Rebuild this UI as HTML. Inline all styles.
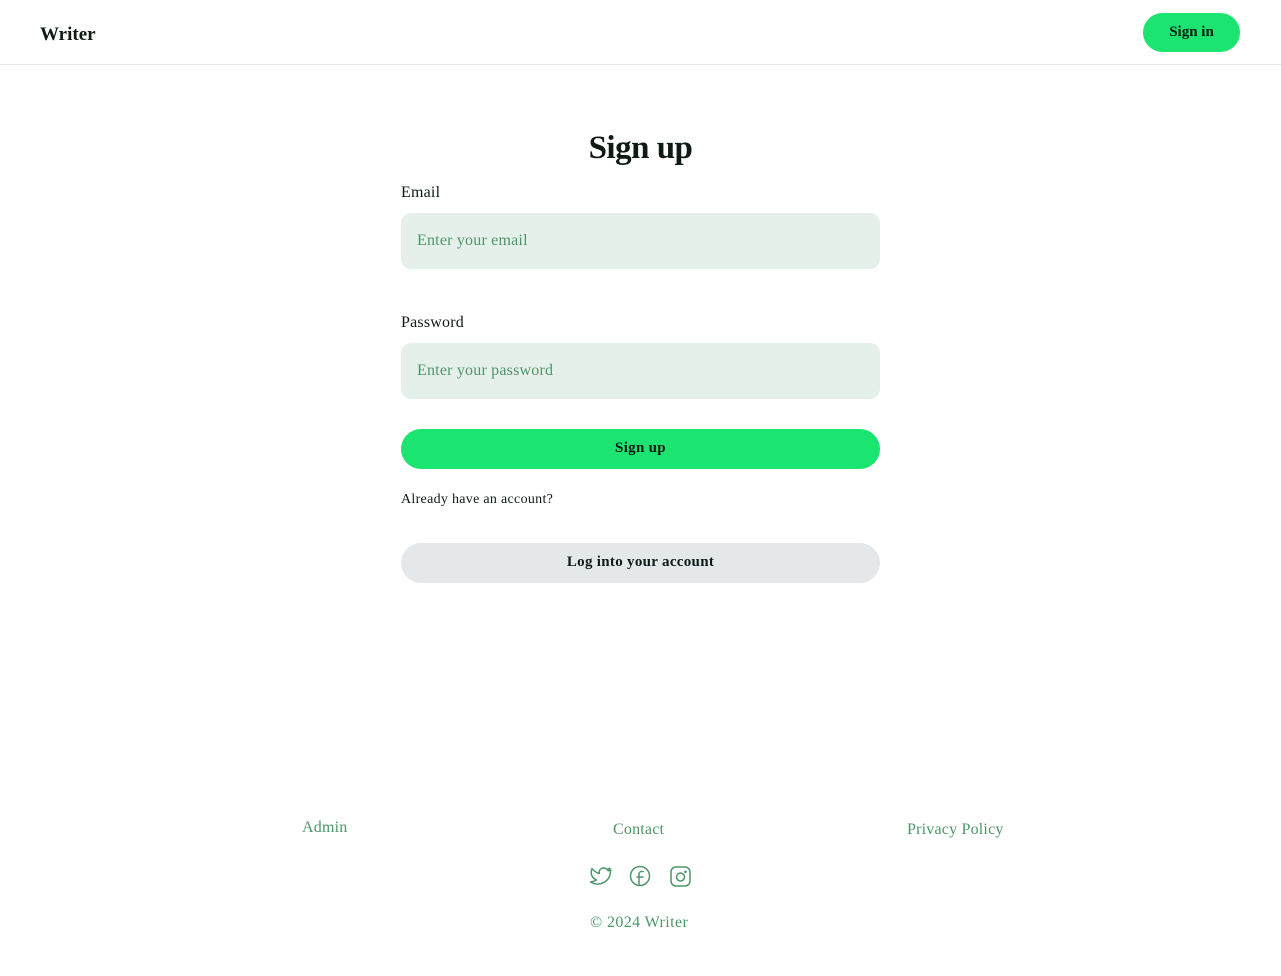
<!DOCTYPE html>
<html><head><meta charset="utf-8"><style>
*{box-sizing:border-box;margin:0;padding:0}
body{width:1281px;height:976px;background:#fff;font-family:"Liberation Serif",serif;color:#0e1a13;position:relative;overflow:hidden}
header{height:65px;border-bottom:1px solid #e5e8eb;position:relative}
.logo{position:absolute;left:40px;top:24px;font-size:19px;font-weight:bold}
.signin{position:absolute;left:1143px;top:13px;width:97px;height:39px;border-radius:20px;background:#1be470;font-weight:bold;font-size:15px;text-align:center;line-height:38px}
h1{position:absolute;top:130px;width:100%;text-align:center;font-size:33px;font-weight:bold;letter-spacing:-0.5px}
.lbl{position:absolute;left:401px;font-size:16px;letter-spacing:.2px}
.inp{position:absolute;left:401px;width:479px;height:56px;border-radius:10px;background:#e6f0eb;color:#4d9669;font-size:16px;padding-left:16px;line-height:55px;letter-spacing:.2px}
.btn{position:absolute;left:401px;width:479px;height:40px;border-radius:20px;text-align:center;font-weight:bold;font-size:15px;line-height:39px;letter-spacing:.3px}
.f{position:absolute;color:#4d9669;font-size:16px;letter-spacing:.2px}
</style></head><body>
<header><div class="logo">Writer</div><div class="signin">Sign in</div></header>
<h1>Sign up</h1>
<div class="lbl" style="top:184px">Email</div>
<div class="inp" style="top:213px">Enter your email</div>
<div class="lbl" style="top:314px">Password</div>
<div class="inp" style="top:343px">Enter your password</div>
<div class="btn" style="top:429px;background:#1be470">Sign up</div>
<div class="lbl" style="top:492px;font-size:14px;letter-spacing:.3px">Already have an account?</div>
<div class="btn" style="top:543px;background:#e5e8eb">Log into your account</div>
<div class="f" style="left:302px;top:819px">Admin</div>
<div class="f" style="left:613px;top:821px">Contact</div>
<div class="f" style="left:907px;top:821px">Privacy Policy</div>
<svg style="position:absolute;left:589px;top:865px" width="104" height="24" fill="none" stroke="#4d9669" stroke-width="1.5" stroke-linecap="round" stroke-linejoin="round">
<path d="M22 5c-1 .5-2 .8-3 .8 1-.6 1.7-1.5 2-2.6-1 .6-2 1-3 1.2A4.5 4.5 0 0 0 10.3 8.5 12.8 12.8 0 0 1 3 3.5s-3.5 8 4.5 11.5A13 13 0 0 1 1.5 17c9 5 20 0 20-11.5z"/>
<g transform="translate(40,0)"><circle cx="11" cy="11" r="9.5"/><path d="M14 6.5h-1.5a2.5 2.5 0 0 0-2.5 2.5V20.5M8 12h6"/></g>
<g transform="translate(80,0)"><rect x="2" y="2" width="19" height="19" rx="5"/><circle cx="11.5" cy="12" r="4"/><circle cx="16.5" cy="6.8" r=".6" fill="#4d9669"/></g>
</svg>
<div class="f" style="left:590px;top:914px;letter-spacing:.4px">© 2024 Writer</div>
</body></html>
